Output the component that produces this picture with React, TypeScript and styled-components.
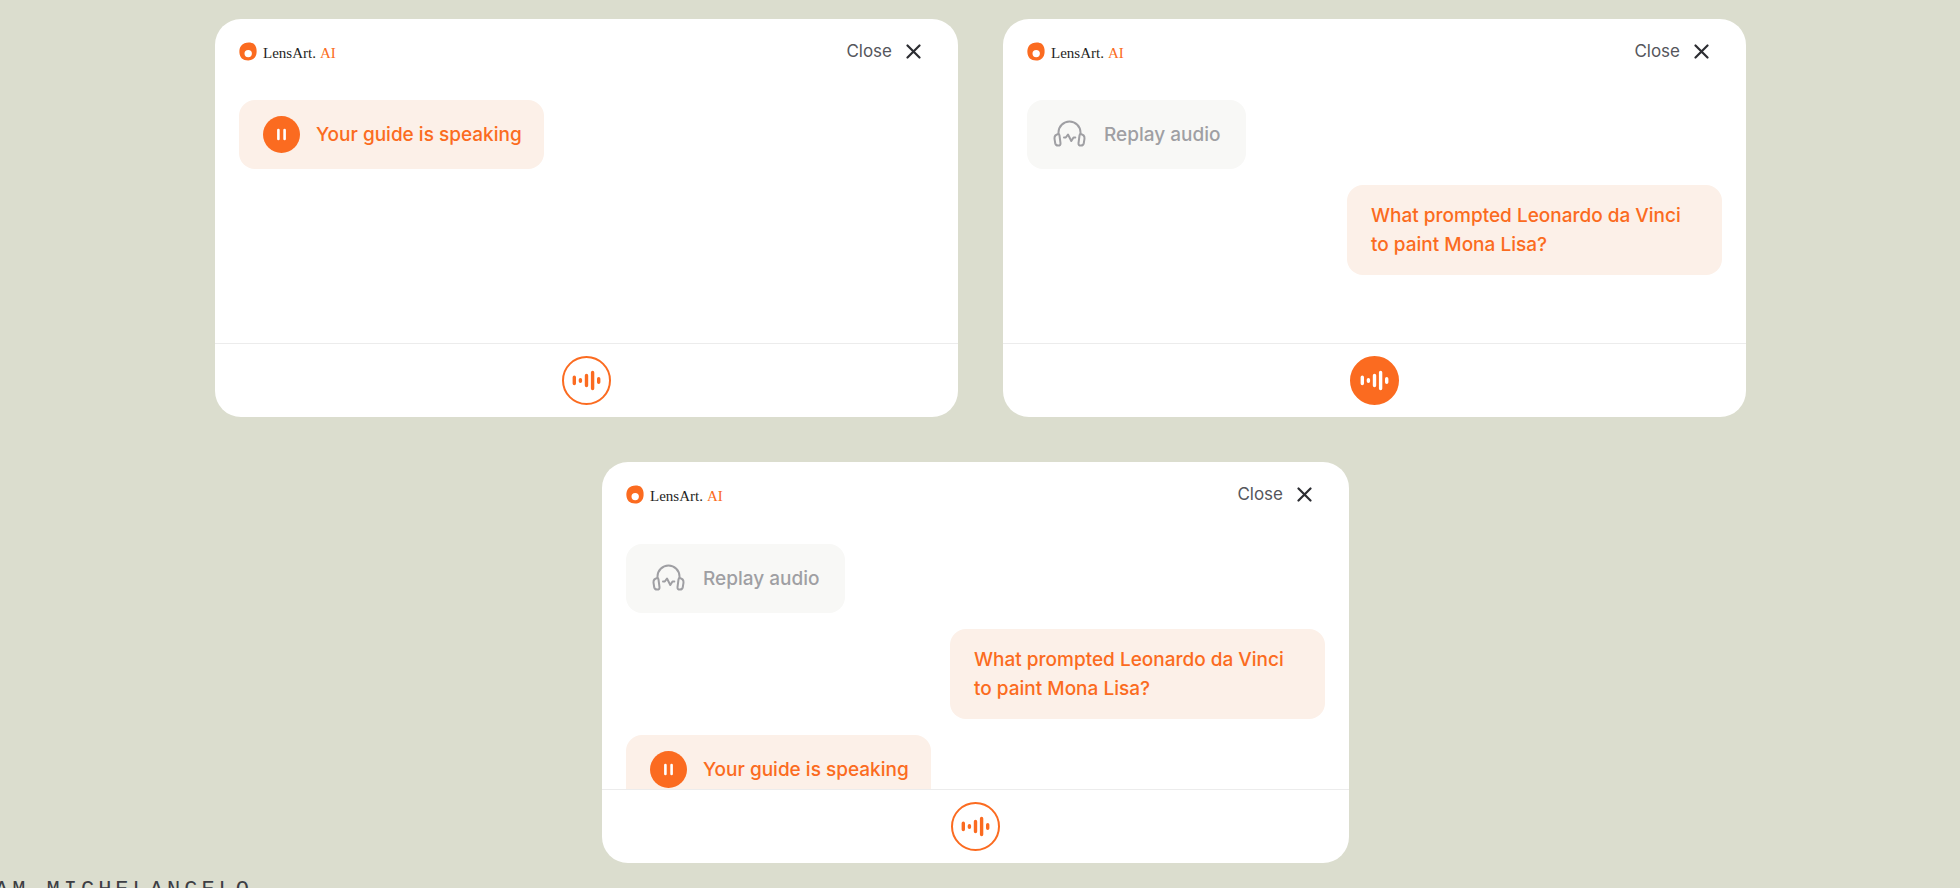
import React from "react";
import styled, { createGlobalStyle } from "styled-components";

const orange = "#fb6b20";

const GlobalStyle = createGlobalStyle`
  *, *::before, *::after { box-sizing: border-box; }
  body {
    margin: 0;
    background: #dbddce;
    font-family: Inter, "Liberation Sans", sans-serif;
  }
`;

const Page = styled.main`
  display: flex;
  flex-direction: column;
  height: 100vh;
  overflow: hidden;
  padding-top: 19px;
`;

const Board = styled.div`
  flex: none;
  display: grid;
  grid-template-columns: 1fr 1fr;
  gap: 45px;
  padding: 0 214px 0 215px;
`;

const Slot = styled.div<{ $wide?: boolean }>`
  display: flex;
  grid-column: ${(p) => (p.$wide ? "1 / -1" : "auto")};
  padding: ${(p) => (p.$wide ? "0 397px 0 387px" : "0")};
`;

const Card = styled.section<{ $tall?: boolean }>`
  flex: 1;
  min-width: 0;
  display: flex;
  flex-direction: column;
  height: ${(p) => (p.$tall ? 401 : 398)}px;
  border-radius: 26px;
  background: #fff;
  overflow: hidden;
`;

const Header = styled.header`
  flex: none;
  display: flex;
  align-items: center;
  justify-content: space-between;
  height: 64px;
  padding: 0 37px 0 24px;
`;

const Brand = styled.div`
  display: flex;
  align-items: flex-end;
  gap: 6px;
  font: 15px/16px "Liberation Serif", serif;
  color: #1f1f24;
`;

const BrandAccent = styled.span`
  margin-left: 4px;
  color: ${orange};
`;

const CloseButton = styled.button`
  display: flex;
  align-items: center;
  gap: 14px;
  border: 0;
  padding: 0;
  background: none;
  font: 400 17px/24px Inter, sans-serif;
  color: #55565c;
  cursor: pointer;
`;

const Thread = styled.div<{ $tall?: boolean }>`
  flex: 1;
  min-height: 0;
  overflow: hidden;
  display: flex;
  flex-direction: column;
  align-items: flex-start;
  gap: 16px;
  padding: ${(p) => (p.$tall ? 18 : 17)}px 24px 0;
`;

const AudioBubble = styled.button<{ $active?: boolean }>`
  flex: none;
  display: flex;
  align-items: center;
  gap: 16px;
  height: 69px;
  padding: 0 ${(p) => (p.$active ? 22 : 26)}px 0 24px;
  border: 0;
  border-radius: 16px;
  background: ${(p) => (p.$active ? "#fcf0e8" : "#f8f8f6")};
  font: 500 19px/28px Inter, sans-serif;
  color: ${(p) => (p.$active ? orange : "#9f9fa3")};
  white-space: nowrap;
  cursor: pointer;
`;

const Question = styled.p`
  flex: none;
  align-self: flex-end;
  width: 375px;
  margin: 0;
  padding: 16px 24px;
  border-radius: 16px;
  background: #fcf0e8;
  font-size: 19px;
  font-weight: 500;
  line-height: 29px;
  color: ${orange};
`;

const Footer = styled.footer`
  flex: none;
  display: flex;
  align-items: center;
  justify-content: center;
  height: 74px;
  border-top: 1px solid #ececec;
`;

const MicButton = styled.button<{ $filled?: boolean }>`
  display: grid;
  place-items: center;
  width: 49px;
  height: 49px;
  padding: 0;
  border: 2px solid ${orange};
  border-radius: 50%;
  background: ${(p) => (p.$filled ? orange : "#fff")};
  color: ${(p) => (p.$filled ? "#fff" : orange)};
  cursor: pointer;
`;

const Caption = styled.div`
  flex: none;
  display: flex;
  justify-content: flex-end;
  width: 253px;
  margin-top: 14px;
  overflow: hidden;
  font: 22px/28px "Liberation Mono", monospace;
  letter-spacing: 4px;
  white-space: nowrap;
  color: #3d3e44;
`;

const LogoMark = () => (
  <svg width="18" height="19" viewBox="0 0 18 19" aria-hidden="true">
    <path
      fill={orange}
      fillRule="evenodd"
      d="M5.500 1.200C8.500 0 13 .2 15 2c2.200 2 2.800 5 2.600 8.200C17.300 15.300 14.300 18.500 9.200 18.500 3.800 18.500.700 15.500.400 10.500.200 6.500 1.500 2.800 5.500 1.200ZM9.200 7.900a3.700 3.700 0 1 0 0 7.400 3.700 3.700 0 0 0 0-7.400Z"
    />
  </svg>
);

const CrossIcon = () => (
  <svg width="15" height="15" viewBox="0 0 15 15" fill="none" stroke="#2c2d32" strokeWidth="2.200" strokeLinecap="round" aria-hidden="true">
    <path d="M1.500 1.500l12 12M13.500 1.500l-12 12" />
  </svg>
);

const PauseIcon = () => (
  <svg width="37" height="37" viewBox="0 0 37 37" aria-hidden="true">
    <circle cx="18.500" cy="18.500" r="18.500" fill={orange} />
    <path d="M15.400 14v9M21.600 14v9" stroke="#fff" strokeWidth="2.600" strokeLinecap="round" />
  </svg>
);

const HeadphonesIcon = () => (
  <svg width="37" height="37" viewBox="0 0 37 37" fill="none" stroke="currentColor" strokeWidth="2" strokeLinecap="round" strokeLinejoin="round" aria-hidden="true">
    <path d="M7.500 18v-1.500a11 11 0 0 1 22 0V18" />
    <path d="M7.500 18c-2.200.3-4.200 2-4 4.700l.7 4.500c.3 1.600 1.200 2.300 2.800 2.300 2 0 2.700-.7 2.500-2.400L8.500 19.500c-.1-.9-.3-1.400-1-1.500Z" />
    <path d="M29.500 18c2.200.3 4.200 2 4 4.700l-.7 4.500c-.3 1.600-1.200 2.300-2.800 2.300-2 0-2.700-.7-2.500-2.400l1-7.600c.1-.9.3-1.400 1-1.500Z" />
    <path d="M13 21.500h1.800l2.200-3 3.300 6.500 2.200-3.500h1.800" />
  </svg>
);

const WaveIcon = () => (
  <svg width="29" height="21" viewBox="0 0 29 21" fill="none" stroke="currentColor" strokeWidth="3.400" strokeLinecap="round" aria-hidden="true">
    <path d="M2.300 7.300v6.200M8.400 9.700v1.600M14.500 5.500v10M20.600 2.400v16.200M26.700 8.700v3.600" />
  </svg>
);

type Message = "speaking" | "replay" | "question";

const Bubble = ({ kind }: { kind: Message }) => {
  if (kind === "question") return <Question>What prompted Leonardo da Vinci to paint Mona Lisa?</Question>;
  if (kind === "replay")
    return (
      <AudioBubble type="button">
        <HeadphonesIcon />
        Replay audio
      </AudioBubble>
    );
  return (
    <AudioBubble type="button" $active>
      <PauseIcon />
      Your guide is speaking
    </AudioBubble>
  );
};

const GuideCard = ({ messages, recording, tall }: { messages: Message[]; recording?: boolean; tall?: boolean }) => (
  <Card $tall={tall}>
    <Header>
      <Brand>
        <LogoMark />
        <span>
          LensArt.
          <BrandAccent>AI</BrandAccent>
        </span>
      </Brand>
      <CloseButton type="button">
        Close
        <CrossIcon />
      </CloseButton>
    </Header>
    <Thread $tall={tall}>
      {messages.map((kind) => (
        <Bubble key={kind} kind={kind} />
      ))}
    </Thread>
    <Footer>
      <MicButton type="button" $filled={recording} aria-label="Ask by voice">
        <WaveIcon />
      </MicButton>
    </Footer>
  </Card>
);

export default function App() {
  return (
    <Page>
      <GlobalStyle />
      <Board>
        <Slot>
          <GuideCard messages={["speaking"]} />
        </Slot>
        <Slot>
          <GuideCard messages={["replay", "question"]} recording />
        </Slot>
        <Slot $wide>
          <GuideCard messages={["replay", "question", "speaking"]} tall />
        </Slot>
      </Board>
      <Caption>AM MICHELANGELO</Caption>
    </Page>
  );
}
